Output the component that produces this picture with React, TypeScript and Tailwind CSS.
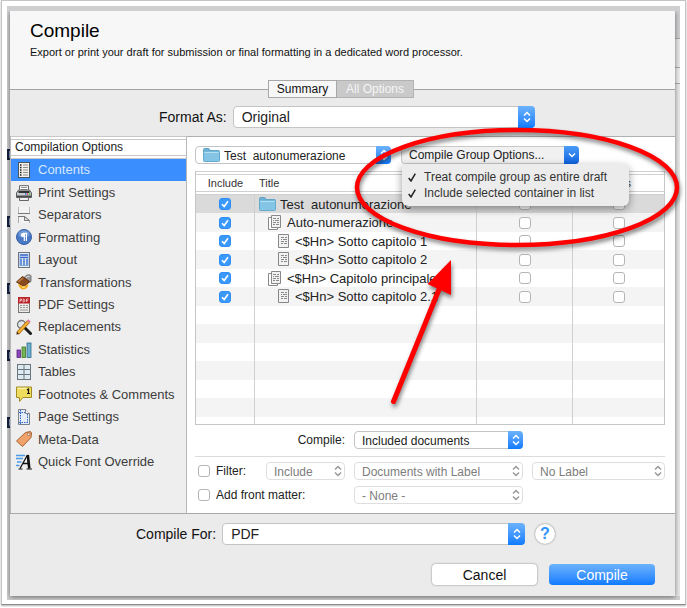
import { useState } from "react";
import type { ReactNode } from "react";
import clsx from "clsx";

const sidebarItems: { label: string; icon: ReactNode }[] = [
  {
    label: "Contents",
    icon: (
      <>
        <rect x="2.5" y=".5" width="11" height="15" fill="#f4f1ea" stroke="#4b5560" />
        <path d="M4 3h1.5M4 5.5h1.5M4 8h1.5M4 10.5h1.5M4 13h1.5" stroke="#222" strokeWidth="1.4" />
        <path d="M7 3h5M7 5.5h5M7 8h5M7 10.5h5M7 13h5" stroke="#8d8d8d" />
      </>
    ),
  },
  {
    label: "Print Settings",
    icon: (
      <>
        <path d="M3.5 6V.7h9V6" fill="#fff" stroke="#666" />
        <path d="M5 2.5h6M5 4.5h6" stroke="#999" />
        <path d="M2.5 5h11l2 3v4.5H.5V8z" fill="#c9ccd0" stroke="#5a5a5a" />
        <path d="M2.5 6h11v2h-11z" fill="#333" />
        <path d="M1 10.500h14V12H1z" fill="#4a4a4a" />
        <path d="M9 9h1.5" stroke="#3b6fe0" strokeWidth="1.5" />
        <path d="M11 9h1.2" stroke="#e33" strokeWidth="1.5" />
        <path d="M13 9h1.2" stroke="#3c3" strokeWidth="1.5" />
        <path d="M3.500 12.500h9v3h-9z" fill="#eee" stroke="#666" />
      </>
    ),
  },
  {
    label: "Separators",
    icon: (
      <>
        <path d="M2.500 0v6.500h11V0" fill="#f3f3f3" stroke="#bbb" />
        <path d="M2 6.500h12" stroke="#777" />
        <path d="M2.500 16V9.500h6l5 4V16" fill="#f3f3f3" stroke="#aaa" />
        <path d="M2 9.500h6.500l5 4h-5v-4" fill="#ddd" stroke="#777" />
      </>
    ),
  },
  {
    label: "Formatting",
    icon: (
      <>
        <circle cx="8" cy="8" r="7.5" fill="#4a78c4" stroke="#3560a8" />
        <ellipse cx="8" cy="5" rx="5.5" ry="3.8" fill="#8fb0e4" opacity=".6" />
        <path d="M8.3 4v8M10.4 4v8M11.2 4.300H7" stroke="#fff" strokeWidth="1.2" />
        <circle cx="7" cy="6" r="2.1" fill="#fff" />
      </>
    ),
  },
  {
    label: "Layout",
    icon: (
      <>
        <rect x="2.5" y=".5" width="11" height="15" fill="#e6ecf5" stroke="#6d747c" />
        <path d="M4 3h8M4 5.500h8M5 7v6.500M8 7v6.500M11 7v6.500" stroke="#2c62c8" strokeWidth="1.3" />
        <path d="M4 2v12M12 2v12M4 13.500h8" stroke="#6f9be6" strokeWidth=".8" />
      </>
    ),
  },
  {
    label: "Transformations",
    icon: (
      <>
        <path d="M8 5c1-4 4-5 7-3.500v6L12 9z" fill="#999" stroke="#777" />
        <path d="M9.500 4.500c1-2 2.500-2.500 4-2" stroke="#eee" />
        <path d="M.5 8l6-5.500 7 5L8 12.500z" fill="#8a4a1b" stroke="#5b2d0d" />
        <path d="M2 8l5-4" stroke="#c68748" strokeWidth="1.5" />
        <path d="M2 9.500l6 3.500 4-3c1 2-1 5.500-5 5.500-2 0-4-2-5-6z" fill="#f3ab1e" />
        <path d="M6 13h3" stroke="#ffe07a" strokeWidth="1.5" />
      </>
    ),
  },
  {
    label: "PDF Settings",
    icon: (
      <>
        <rect x="2.5" y=".5" width="11" height="15" fill="#eceae8" stroke="#777" />
        <path d="M2 0h12v6.500H2z" fill="#b8242a" />
        <path
          d="M4 5V2h1.500v1.500H4M7.200 2v3h.8l.8-1v-1L8 2zM10.500 5V2h2M10.500 3.500h1.500"
          stroke="#f6cccc"
          strokeWidth=".8"
        />
        <path d="M4 8.500h2m1 0h2m1 0h2M4 10.500h2m1 0h2m1 0h2M4 13h8" stroke="#999" />
      </>
    ),
  },
  {
    label: "Replacements",
    icon: (
      <>
        <circle cx="5.5" cy="5.5" r="4" fill="#dfe7ec" stroke="#777" strokeWidth="1.3" />
        <path d="M9 9l5.500 5.500" stroke="#1c1c1c" strokeWidth="3" strokeLinecap="round" />
        <path d="M1.500 14.500l11-12" stroke="#a8650c" strokeWidth="3.6" />
        <path d="M2 14l10.500-11.500" stroke="#f5b335" strokeWidth="2.2" />
        <path d="M12 3l1.500-1.700" stroke="#d77ba0" strokeWidth="3.4" />
        <path d="M.3 15.700l.8-2.700 1.700 1.700z" fill="#222" />
      </>
    ),
  },
  {
    label: "Statistics",
    icon: (
      <>
        <rect x="1" y="8" width="3.5" height="7.5" fill="#8b46b8" stroke="#5a2383" strokeWidth=".8" />
        <rect x="6" y="5" width="3.5" height="10.5" fill="#77b255" stroke="#3f7a26" strokeWidth=".8" />
        <rect x="11" y="1" width="4" height="14.5" fill="#6fb0cf" stroke="#2d6a8c" strokeWidth=".8" />
      </>
    ),
  },
  {
    label: "Tables",
    icon: (
      <>
        <rect x="1.5" y=".5" width="13" height="15" fill="#dfeaf0" stroke="#67757e" />
        <path d="M8 1v14M2 5.500h12M2 10.500h12" stroke="#67757e" />
      </>
    ),
  },
  {
    label: "Footnotes & Comments",
    icon: (
      <>
        <path d="M.5 1h15v10.500H7L3.500 15.500v-4h-3z" fill="#f0dc5c" stroke="#a08c26" />
        <path d="M1.500 2.500h9" stroke="#fbf2a6" strokeWidth="1.5" />
        <path d="M11 4l1.500-1v5M11 7.500h3" stroke="#111" strokeWidth="1.2" />
      </>
    ),
  },
  {
    label: "Page Settings",
    icon: (
      <>
        <path d="M2.500.5h7l4 4v11h-11z" fill="#e4edf8" stroke="#7b8189" />
        <path d="M9.500.5v4h4" fill="#fff" stroke="#7b8189" />
        <path d="M4.500 1v14M11.500 5v10M3 3.500h6M3 13.500h10" stroke="#2f62c8" strokeDasharray="1.5 1" />
      </>
    ),
  },
  {
    label: "Meta-Data",
    icon: (
      <>
        <path d="M9.500 1.500l5-1 1 1.500-.5 4.500-8.500 9L.5 10z" fill="#f0a26a" stroke="#a5612f" strokeLinejoin="round" />
        <circle cx="12.8" cy="3.2" r="1.3" fill="#fff" stroke="#8b5028" strokeWidth=".7" />
      </>
    ),
  },
  {
    label: "Quick Font Override",
    icon: (
      <>
        <path d="M0 1.500h9M0 4.500h7M1 8h4.500M0 11.500h3.500" stroke="#4d9be6" strokeWidth="1.5" />
        <path d="M11.500 1L4 14.500M7 9.500h5" stroke="#111" strokeWidth="1.3" />
        <path d="M11.800 1l1.500 13.500" stroke="#111" strokeWidth="2.6" />
        <path d="M2.500 15h4M10.500 15H16" stroke="#111" strokeWidth="1.2" />
      </>
    ),
  },
];

type DocumentRow = {
  title: string;
  level: 0 | 1 | 2;
};

const documentRows: DocumentRow[] = [
  { title: "Test\u00a0 autonumerazione", level: 0 },
  { title: "Auto-numerazione", level: 1 },
  { title: "<$Hn> Sotto capitolo 1", level: 2 },
  { title: "<$Hn> Sotto capitolo 2", level: 2 },
  { title: "<$Hn> Capitolo principale", level: 1 },
  { title: "<$Hn> Sotto capitolo 2.1", level: 2 },
];

function FolderIcon() {
  return (
    <svg width="17" height="14" viewBox="0 0 17 14" className="shrink-0">
      <path d="M.5 3V1.500q0-1 1-1h4q.8 0 1.200 1l.3 1h9v3H.5z" fill="#6db4d6" stroke="#5fa3c4" />
      <rect x=".5" y="3" width="16" height="10.5" rx=".8" fill="#84c5e6" stroke="#66abcc" />
      <path d="M1.500 4.500h14" stroke="#b4e0f4" />
    </svg>
  );
}

function PageIcon({ stacked }: { stacked: boolean }) {
  return (
    <svg width={stacked ? 13 : 11} height="15" viewBox={stacked ? "-2 0 13 15" : "0 0 11 15"} className="shrink-0">
      {stacked && <path d="M-1.500 2.500h9v12h-9z" fill="#fff" stroke="#888" />}
      <path d={stacked ? "M1.500.5h9v12h-9z" : "M.5.5h10v13H.5z"} fill="#f2f2f2" stroke="#888" />
      <path d="M3 3.500h3m1 0h2M3 5.500h1m1 0h4M3 7.500h3m1 0h2M3 9.500h2m1 0h3" stroke="#888" />
    </svg>
  );
}

function UpDown() {
  return (
    <svg width="8" height="12" viewBox="0 0 8 12" fill="none" strokeWidth="1.5">
      <path d="M1 4.500l3-3 3 3M1 7.500l3 3 3-3" stroke="currentColor" />
    </svg>
  );
}

type PopupProps = {
  label: string;
  options: string[];
  large?: boolean;
  disabled?: boolean;
  icon?: ReactNode;
  className?: string;
  id?: string;
};

function Popup({ label, options, large, disabled, icon, className, id }: PopupProps) {
  return (
    <div className={clsx("relative flex", className)}>
      {icon && <span className="pointer-events-none absolute inset-y-0 left-2 flex items-center">{icon}</span>}
      <select
        id={id}
        aria-label={label}
        disabled={disabled}
        className={clsx(
          "w-full appearance-none rounded border bg-white pr-5 outline-none",
          large ? "h-[22px] pl-2 text-[14px]" : "h-[18px] pb-[2px] text-[12px]",
          !large && (icon ? "pl-7" : "pl-[7px]"),
          disabled ? "border-[#dedede] text-[#7d7d7d]" : "border-[#c4c4c4] text-[#222]",
        )}
      >
        {options.map(o => (
          <option key={o}>{o}</option>
        ))}
      </select>
      <span
        className={clsx(
          "pointer-events-none absolute inset-y-0 right-0 flex items-center justify-center rounded-r",
          large ? "w-[17px]" : "w-[15px]",
          disabled ? "text-[#999]" : "bg-linear-to-b from-[#6bb2fb] to-[#0a7bff] text-white",
        )}
      >
        <UpDown />
      </span>
    </div>
  );
}

function Checkbox({ label, defaultChecked, centered }: { label?: string; defaultChecked?: boolean; centered?: boolean }) {
  return (
    <span className={clsx("relative grid size-3 shrink-0", centered && "mx-auto")}>
      <input
        type="checkbox"
        aria-label={label}
        defaultChecked={defaultChecked}
        className="peer size-3 appearance-none rounded-[3px] border border-[#b5b5b5] bg-white checked:border-[#2f8df5] checked:bg-[#3b99fc]"
      />
      <svg
        viewBox="0 0 12 12"
        className="pointer-events-none absolute inset-0 hidden size-3 peer-checked:block"
        fill="none"
        stroke="#fff"
        strokeWidth="1.6"
      >
        <path d="M3 6.200l2.200 2.300L9 3.200" />
      </svg>
    </span>
  );
}

function Sidebar() {
  const [active, setActive] = useState("Contents");
  return (
    <nav className="-mt-px w-[177px] shrink-0 border-x border-[#b9b9b9] bg-[#eeeeee]">
      <h2 className="h-[23px] border-y-4 border-double border-[#c8c8c8] bg-white pl-1 text-[12px] leading-[15px] text-[#222]">
        Compilation Options
      </h2>
      <ul className="grid h-[314px] auto-rows-fr">
        {sidebarItems.map(({ label, icon }) => (
          <li key={label} className="flex">
            <button
              type="button"
              onClick={() => setActive(label)}
              className={clsx(
                "flex w-full items-center gap-[6px] pl-[5px] text-left text-[13px]",
                active === label ? "bg-[#3a8efd] text-[#d6e6ff]" : "text-[#3c3c3c]",
              )}
            >
              <svg width="16" height="16" viewBox="0 0 16 16" fill="none" className="shrink-0">
                {icon}
              </svg>
              <span className="whitespace-nowrap">{label}</span>
            </button>
          </li>
        ))}
      </ul>
    </nav>
  );
}

function GroupOptions() {
  const [open, setOpen] = useState(true);
  return (
    <div className="relative w-[178px]">
      <button
        type="button"
        aria-expanded={open}
        onClick={() => setOpen(prev => !prev)}
        className="flex h-[18px] w-full items-center justify-between rounded border border-r-0 border-[#c9c9c9] bg-[#f1f1f1] pl-[7px] text-[12px] text-[#222]"
      >
        Compile Group Options...
        <span className="-my-px flex h-[18px] w-[15px] items-center justify-center rounded-r bg-linear-to-b from-[#4a9bf5] to-[#0a62e0]">
          <svg width="8" height="6" viewBox="0 0 8 6" fill="none">
            <path d="M1 1.500l3 3 3-3" stroke="#fff" strokeWidth="1.4" />
          </svg>
        </span>
      </button>
      {open && (
        <ul
          role="menu"
          className="absolute top-[18px] left-px z-10 w-[227px] rounded-md rounded-tl-none bg-[#ececec] py-[5px] text-[12px] leading-4 text-[#333] shadow-[0_3px_9px_rgba(0,0,0,0.4)]"
        >
          {["Treat compile group as entire draft", "Include selected container in list"].map(item => (
            <li key={item} role="menuitemcheckbox" aria-checked="true" className="flex items-center gap-2 pl-[6px]">
              <svg width="8" height="9" viewBox="0 0 8 9" fill="none">
                <path d="M.7 5l2.300 3L7.300.7" stroke="#222" strokeWidth="1.5" />
              </svg>
              {item}
            </li>
          ))}
        </ul>
      )}
    </div>
  );
}

function ContentsTable() {
  const th = "h-6 border-y-4 border-double border-[#d0d0d0] p-0 font-normal";
  const td = "border-r border-[#d0d0d0] p-0 text-center leading-none";
  return (
    <table className="w-full table-fixed border-separate border-spacing-0 border-x border-b border-[#c6c6c6]">
      <colgroup>
        <col className="w-[59px]" />
        <col />
        <col className="w-24" />
        <col className="w-[91px]" />
      </colgroup>
      <thead className="text-[11px] leading-4 text-[#333]">
        <tr>
          <th className={th}>Include</th>
          <th className={clsx(th, "pl-1 text-left")}>Title</th>
          <th className={th} aria-label="Page Break" />
          <th className={th}>As-Is</th>
        </tr>
      </thead>
      <tbody className="text-[13px] text-[#222]">
        {documentRows.map(({ title, level }) => (
          <tr key={title} className={clsx("odd:h-[18px] even:h-[19px] even:bg-[#f4f4f4]", level === 0 && "bg-[#dadada]")}>
            <td className={td}>
              <Checkbox label={`Include ${title}`} defaultChecked centered />
            </td>
            <td className={td}>
              <div
                className={clsx(
                  "flex items-center whitespace-nowrap",
                  level === 0 && "gap-1 pl-1",
                  level === 1 && "gap-[6px] pl-[13px]",
                  level === 2 && "gap-[6px] pl-[23px]",
                )}
              >
                {level === 0 ? <FolderIcon /> : <PageIcon stacked={level === 1} />}
                {title}
              </div>
            </td>
            <td className={td}>
              <Checkbox label={`Page break before ${title}`} centered />
            </td>
            <td className="p-0">
              <Checkbox label={`${title} as is`} centered />
            </td>
          </tr>
        ))}
        {[...Array(6)].map((_, i) => (
          <tr key={i} className="odd:h-[18px] even:h-[19px] even:bg-[#f4f4f4]">
            <td className={td} />
            <td className={td} />
            <td className={td} />
            <td />
          </tr>
        ))}
        <tr className="h-[7px]">
          <td className={td} />
          <td className={td} />
          <td className={td} />
          <td />
        </tr>
      </tbody>
    </table>
  );
}

function Filters() {
  return (
    <div className="grid grid-cols-[150px_169px_1fr] items-center gap-x-[9px] text-[12px] text-[#222]">
      <label htmlFor="compile" className="text-right">
        Compile:
      </label>
      <Popup id="compile" label="Compile" options={["Included documents", "All"]} />
      <span />
      <hr className="col-span-3 mt-[7px] mb-[5px] border-[#dcdcdc]" />
      <div className="flex items-center justify-between">
        <label className="flex items-center gap-[6px] pl-[3px]">
          <Checkbox />
          Filter:
        </label>
        <Popup label="Filter mode" options={["Include"]} disabled className="w-[79px]" />
      </div>
      <Popup label="Filter by" options={["Documents with Label"]} disabled />
      <Popup label="Filter label" options={["No Label"]} disabled />
      <label className="mt-[6px] flex items-center gap-[6px] pl-[3px]">
        <Checkbox />
        Add front matter:
      </label>
      <Popup label="Front matter" options={["- None -"]} disabled className="mt-[6px]" />
    </div>
  );
}

function CompileDialog() {
  return (
    <section className="relative z-[1] min-w-0 flex-1 bg-[#ebebeb] shadow-[0_1px_5px_rgba(0,0,0,0.5)]">
      <header className="h-[79px] border-b border-[#a3a3a3] bg-[#f7f7f7] pt-2 pl-5">
        <h1 className="text-[19px] leading-6 text-black">Compile</h1>
        <p className="text-[11px] leading-[18px] text-[#111]">
          Export or print your draft for submission or final formatting in a dedicated word processor.
        </p>
      </header>
      <div className="-mt-[10px] flex justify-center pr-[3px] text-[12px] leading-4">
        <button type="button" className="h-[18px] w-[69px] border border-[#a8a8a8] bg-[#f7f7f7] text-[#111]">
          Summary
        </button>
        <button type="button" className="h-[18px] w-[77px] border border-l-0 border-[#b2b2b2] bg-[#c9c9c9] text-[#f5f5f5]">
          All Options
        </button>
      </div>
      <div className="flex items-center gap-[6px] border-b border-[#b0b0b0] pt-2 pb-[8px] pl-[149px] text-[14px] text-[#111]">
        <label htmlFor="format">Format As:</label>
        <Popup id="format" label="Format As" options={["Original"]} large className="mr-[140px] flex-1" />
      </div>
      <div className="flex border-b border-[#a9a9a9]">
        <Sidebar />
        <main className="min-w-0 flex-1 bg-white pt-[9px] pr-[10px] pb-[9px] pl-2">
          <div className="mb-[7px] flex gap-[10px]">
            <Popup label="Compile group" options={["Test\u00a0 autonumerazione"]} icon={<FolderIcon />} className="w-[196px]" />
            <GroupOptions />
          </div>
          <ContentsTable />
          <div className="mt-[6px]">
            <Filters />
          </div>
        </main>
      </div>
      <footer className="pt-[9px] pr-5 pb-[11px] text-[14px] text-[#111]">
        <div className="flex items-center gap-[6px] pl-[126px]">
          <label htmlFor="target">Compile For:</label>
          <Popup id="target" label="Compile For" options={["PDF"]} large className="flex-1" />
          <button
            type="button"
            aria-label="Help"
            className="mr-[100px] ml-1 size-5 rounded-full bg-white text-[16px] leading-5 font-bold text-[#2e93fb] shadow-[0_0_2px_rgba(0,0,0,0.5)]"
          >
            ?
          </button>
        </div>
        <div className="mt-[19px] flex justify-end gap-3">
          <button type="button" className="h-[21px] w-[105px] rounded bg-white leading-5 shadow-[0_0_2px_rgba(0,0,0,0.5)]">
            Cancel
          </button>
          <button
            type="button"
            className="h-[21px] w-[106px] rounded bg-linear-to-b from-[#6bb2fb] to-[#0a7bff] leading-5 text-white"
          >
            Compile
          </button>
        </div>
      </footer>
    </section>
  );
}

function Annotations() {
  return (
    <svg
      width="687"
      height="608"
      viewBox="0 0 687 608"
      fill="none"
      className="pointer-events-none absolute top-0 left-0 z-20 drop-shadow-[1px_3px_2px_rgba(0,0,0,0.5)]"
    >
      <ellipse cx="517" cy="187.5" rx="160" ry="57.5" stroke="#f00" strokeWidth="4.5" />
      <path d="M393.500 401.500L440 287" stroke="#f00" strokeWidth="5" strokeLinecap="round" />
      <path d="M451 260v35l-23.500-11z" fill="#f00" />
    </svg>
  );
}

export default function App() {
  return (
    <div className="relative overflow-hidden bg-white font-['Liberation_Sans',Arial,sans-serif]">
      <div className="mx-px mb-[2px] border border-[#c4c4c4] border-b-[#8a8a8a] p-[5px] pb-[4px] shadow-[0_1px_2px_rgba(0,0,0,0.3)]">
        <div className="bg-[#cfcfd1] pt-[5px]">
          <div className="flex overflow-hidden pb-1">
            <div className="flex w-[3px] shrink-0 flex-col gap-14 bg-[#d2d2d4] pt-[138px]">
              {[...Array(5)].map((_, i) => (
                <span key={i} className="h-[11px] border-y-2 border-l-2 border-[#16223f] bg-[#8fa3c8]" />
              ))}
            </div>
            <CompileDialog />
            <div className="w-[5px] shrink-0 bg-[linear-gradient(#cfcfd1_0_27px,#aaa_27px_28px,#e8e8e8_28px_56px,#aaa_56px_57px,#eee_57px_72px,#aaa_72px_73px,#e8e8e8_73px)]" />
          </div>
        </div>
      </div>
      <Annotations />
    </div>
  );
}
